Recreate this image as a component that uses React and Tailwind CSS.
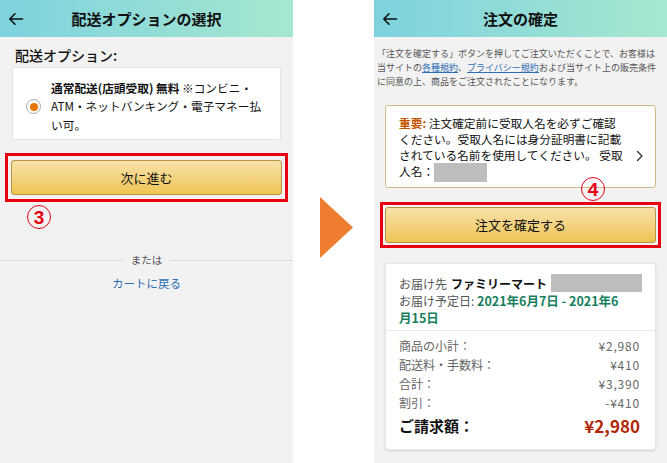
import React from 'react';

const font = "font-['Noto_Sans_CJK_JP','Noto_Sans',sans-serif]";

function Header({ title }) {
  return (
    <div className="relative shrink-0 h-[37px] bg-gradient-to-r from-[#7dd2de] to-[#a6e7cf] flex items-center justify-center">
      <svg className="absolute left-[8px] top-[11px] w-[16px] h-[16px] text-[#111]" viewBox="0 0 16 16" fill="none" stroke="currentColor" strokeWidth="1.6" strokeLinecap="round" strokeLinejoin="round">
        <path d="M14.5 8H1.8M7 2.8L1.8 8 7 13.2" />
      </svg>
      <p className="text-[15px] font-bold text-[#111] leading-none">{title}</p>
    </div>
  );
}

function Circled({ n }) {
  return (
    <div className="w-[24px] h-[24px] rounded-full border-[1.5px] border-[#e60012] flex items-center justify-center">
      <span className="text-[19px] font-bold text-[#e60012] leading-none font-['Liberation_Sans',sans-serif]">{n}</span>
    </div>
  );
}

function YellowButton({ label, h }) {
  return (
    <div className={`${h} rounded-[3px] border border-[#b89445] bg-gradient-to-b from-[#f8e2a9] to-[#efc450] flex items-center justify-center`}>
      <span className="text-[13px] text-[#111]">{label}</span>
    </div>
  );
}

function LeftPanel() {
  return (
    <div className="w-[293px] shrink-0 h-full bg-[#f2f2f2] flex flex-col">
      <Header title="配送オプションの選択" />
      <p className="shrink-0 mt-[8px] ml-[15px] text-[14px] font-medium leading-[20px] text-[#111]">配送オプション:</p>
      <div className="shrink-0 mt-[2px] mx-[12px] h-[73px] bg-white border border-[#e3e3e3] rounded-[2px] flex items-center pt-[6px]">
        <div className="w-[38px] flex justify-center shrink-0 pl-[3px]">
          <div className="w-[15px] h-[15px] rounded-full border border-[#a6a6a6] bg-white flex items-center justify-center">
            <div className="w-[8px] h-[8px] rounded-full bg-[#e77600]" />
          </div>
        </div>
        <p className="text-[11.7px] leading-[18.5px] text-[#111] whitespace-nowrap">
          <span className="font-bold">通常配送(店頭受取) 無料</span> ※コンビニ・<br />
          ATM・ネットバンキング・電子マネー払<br />い可。
        </p>
      </div>
      <div className="shrink-0 mt-[13px] mx-[5px] border-[3px] border-[#e60012] px-[3px] py-[4px]">
        <YellowButton label="次に進む" h="h-[35px]" />
      </div>
      <div className="shrink-0 mt-[3px] ml-[27px]">
        <Circled n="3" />
      </div>
      <div className="shrink-0 mt-[23px] flex items-center h-[16px]">
        <div className="flex-1 h-px bg-[#dcdcdc]" />
        <span className="px-[8px] text-[10.5px] text-[#555]">または</span>
        <div className="flex-1 h-px bg-[#dcdcdc]" />
      </div>
      <p className="shrink-0 mt-[7px] text-center text-[11.5px] leading-[16px] text-[#2f6db5]">カートに戻る</p>
    </div>
  );
}

function Row({ label, value }) {
  return (
    <div className="flex justify-between text-[12px] leading-[19px] text-[#666]">
      <span>{label}</span>
      <span className="tracking-[0.8px]">{value}</span>
    </div>
  );
}

function RightPanel() {
  return (
    <div className="w-[293px] shrink-0 h-full bg-[#f2f2f2] flex flex-col">
      <Header title="注文の確定" />
      <p className="shrink-0 pt-[10px] px-[3px] text-[9px] leading-[14px] text-[#555] whitespace-nowrap">
        「注文を確定する」ボタンを押してご注文いただくことで、お客様は<br />
        当サイトの<span className="text-[#2f6db5] underline">各種規約</span>、<span className="text-[#2f6db5] underline">プライバシー規約</span>および当サイト上の販売条件<br />
        に同意の上、商品をご注文されたことになります。
      </p>
      <div className="shrink-0 relative mt-[16px] mx-[11px] h-[83px] bg-white border border-[#d2b98c] rounded-[3px] flex items-start pl-[13px] pt-[9px]">
        <p className="flex-1 text-[11.7px] leading-[16px] text-[#111] whitespace-nowrap">
          <span className="font-bold text-[#c45500]">重要:</span> 注文確定前に受取人名を必ずご確認<br />
          ください。受取人名には身分証明書に記載<br />
          されている名前を使用してください。 受取<br />
          人名：<span className="inline-block align-middle w-[53px] h-[19px] bg-[#bdbdbd]" />
        </p>
        <svg className="mt-[35px] mr-[11px] w-[9px] h-[12px] text-[#333]" viewBox="0 0 9 12" fill="none" stroke="currentColor" strokeWidth="1.4" strokeLinecap="round" strokeLinejoin="round">
          <path d="M2.5 1.5L7 6l-4.5 4.5" />
        </svg>
        <div className="absolute left-[195px] top-[71px]">
          <Circled n="4" />
        </div>
      </div>
      <div className="shrink-0 mt-[14px] mx-[6px] border-[3px] border-[#e60012] p-[2px]">
        <YellowButton label="注文を確定する" h="h-[36px]" />
      </div>
      <div className="shrink-0 mt-[15px] mx-[11px] bg-white border border-[#e6e6e6] rounded-[3px] shadow-sm">
        <div className="px-[13px] pt-[10px] pb-[4px] text-[12px] leading-[17px] text-[#555] whitespace-nowrap">
          <div className="flex items-center">
            <span>お届け先</span>
            <span className="font-bold text-[#111] ml-[4px]">ファミリーマート</span>
            <span className="inline-block ml-[4px] w-[104px] h-[18px] bg-[#bdbdbd]" />
          </div>
          <p>
            お届け予定日: <span className="font-bold text-[#16805e] text-[12.5px]">2021年6月7日 - 2021年6<br />月15日</span>
          </p>
        </div>
        <div className="h-px bg-[#e7e7e7]" />
        <div className="pl-[13px] pr-[15px] pt-[5px] pb-[10px]">
          <Row label="商品の小計：" value="¥2,980" />
          <Row label="配送料・手数料：" value="¥410" />
          <Row label="合計：" value="¥3,390" />
          <Row label="割引：" value="-¥410" />
          <div className="flex justify-between items-center mt-[1px]">
            <span className="text-[15px] font-bold text-[#111]">ご請求額：</span>
            <span className="text-[17px] font-bold text-[#b12704]">¥2,980</span>
          </div>
        </div>
      </div>
    </div>
  );
}

export default function App() {
  return (
    <div className={`w-[667px] h-[463px] bg-white flex overflow-hidden ${font}`}>
      <LeftPanel />
      <div className="flex-1 pt-[197px] pl-[27px]">
        <svg width="33" height="61" viewBox="0 0 33 61">
          <polygon points="0,0 33,30.5 0,61" fill="#ee7d2f" />
        </svg>
      </div>
      <RightPanel />
    </div>
  );
}
